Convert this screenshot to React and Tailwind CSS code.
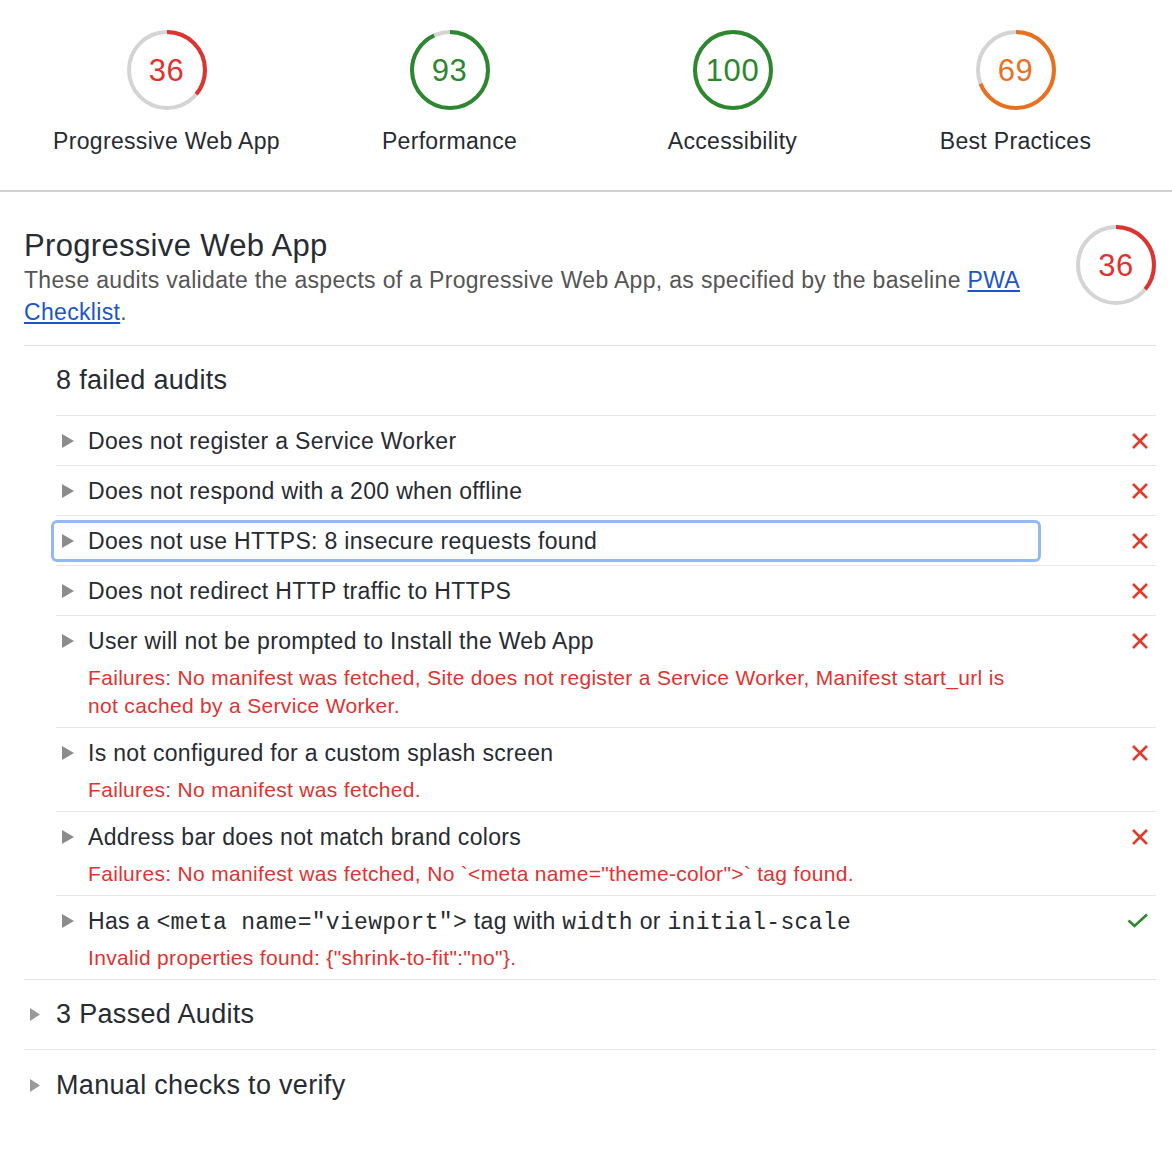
import React from "react";

const FAIL = "#df332f";
const PASS = "#2b882f";
const AVG = "#e8711f";

function Gauge({ score, color }) {
    const r = 38;
    const c = 2 * Math.PI * r;
    const len = (score / 100) * c;
    return (
        <div className="relative w-[80px] h-[80px]">
            <svg width="80" height="80" viewBox="0 0 80 80" className="-rotate-90">
                <circle cx="40" cy="40" r={r} fill="none" stroke="#d4d4d4" strokeWidth="4" />
                <circle
                    cx="40"
                    cy="40"
                    r={r}
                    fill="none"
                    stroke={color}
                    strokeWidth="4"
                    strokeDasharray={`${len} ${c}`}
                />
            </svg>
            <div
                className="absolute inset-0 flex items-center justify-center text-[31px] leading-none tracking-[0.02em]"
                style={{ color }}
            >
                {score}
            </div>
        </div>
    );
}

function Triangle({ size = "row" }) {
    return size === "row" ? (
        <svg width="12" height="14" viewBox="0 0 12 14" className="shrink-0">
            <path d="M0 0 L12 7 L0 14 Z" fill="#8c8c8c" />
        </svg>
    ) : (
        <svg width="10" height="13" viewBox="0 0 10 13" className="shrink-0">
            <path d="M0 0 L10 6.5 L0 13 Z" fill="#999" />
        </svg>
    );
}

function Cross() {
    return (
        <svg width="18" height="18" viewBox="0 0 18 18">
            <path d="M2 2 L16 16 M16 2 L2 16" stroke="#e53a2a" strokeWidth="2.6" />
        </svg>
    );
}

function Check() {
    return (
        <svg width="22" height="16" viewBox="0 0 22 16">
            <path d="M1.5 7.5 L7.5 13 L20 1.5" stroke="#2f8a2f" strokeWidth="2.6" fill="none" />
        </svg>
    );
}

const Code = ({ children }) => (
    <span className="font-['Liberation_Mono',monospace] text-[23px] leading-none">{children}</span>
);

const audits = [
    { title: "Does not register a Service Worker" },
    { title: "Does not respond with a 200 when offline" },
    { title: "Does not use HTTPS: 8 insecure requests found", focused: true },
    { title: "Does not redirect HTTP traffic to HTTPS" },
    {
        title: "User will not be prompted to Install the Web App",
        detail: "Failures: No manifest was fetched, Site does not register a Service Worker, Manifest start_url is not cached by a Service Worker.",
    },
    { title: "Is not configured for a custom splash screen", detail: "Failures: No manifest was fetched." },
    {
        title: "Address bar does not match brand colors",
        detail: 'Failures: No manifest was fetched, No `<meta name="theme-color">` tag found.',
    },
    {
        title: (
            <>
                Has a <Code>{'<meta name="viewport">'}</Code> tag with <Code>width</Code> or <Code>initial-scale</Code>
            </>
        ),
        detail: 'Invalid properties found: {"shrink-to-fit":"no"}.',
        pass: true,
    },
];

const categories = [
    { score: 36, label: "Progressive Web App", color: FAIL },
    { score: 93, label: "Performance", color: PASS },
    { score: 100, label: "Accessibility", color: PASS },
    { score: 69, label: "Best Practices", color: AVG },
];

export default function App() {
    return (
        <div className="w-[1172px] min-h-[1150px] bg-white text-[#272b32] tracking-[0.02em] font-['Liberation_Sans',Arial,sans-serif]">
            {/* top scores */}
            <div className="grid grid-cols-4 pl-[25px] pr-[15px] pt-[30px] pb-[36px] border-b-[2px] border-[#d0d0d0]">
                {categories.map((c) => (
                    <div key={c.label} className="flex flex-col items-center">
                        <Gauge score={c.score} color={c.color} />
                        <div className="mt-[18px] text-[23px] leading-[26px] whitespace-nowrap">{c.label}</div>
                    </div>
                ))}
            </div>

            <div className="pl-6 pr-4">
                {/* section header */}
                <div className="flex pt-[36px] pb-[17px] border-b border-[#e2e2e2]">
                    <div className="flex-1">
                        <h2 className="text-[31px] leading-[36px]">Progressive Web App</h2>
                        <p className="text-[23px] leading-[32px] text-[#555]">
                            These audits validate the aspects of a Progressive Web App, as specified by the baseline{" "}
                            <a href="#" className="text-[#1b55c8] underline">PWA Checklist</a>.
                        </p>
                    </div>
                    <div className="ml-6 w-[80px] -mt-[3px]">
                        <Gauge score={36} color={FAIL} />
                    </div>
                </div>

                {/* failed audits */}
                <div className="pl-8 border-b border-[#e2e2e2]">
                    <div className="h-[70px] flex items-center text-[27px] border-b border-[#e6e6e6]">8 failed audits</div>
                    {audits.map((a, i) => {
                        const last = i === audits.length - 1;
                        const pb = a.detail ? "pb-[7px]" : "pb-[11px]";
                        return (
                            <div key={i} className={`flex pt-3 ${pb} ${last ? "" : "border-b border-[#e6e6e6]"}`}>
                                <div className="w-[984px] -ml-[2px]">
                                    <div
                                        className={`flex items-center gap-[14px] pl-2 py-[5px] -my-[5px] rounded-[3px] ${a.focused ? "ring-[3px] ring-[#93b9f4]" : ""}`}
                                    >
                                        <Triangle />
                                        <div className="h-[26px] text-[23px] leading-[26px] whitespace-nowrap">{a.title}</div>
                                    </div>
                                    {a.detail && (
                                        <div className="mt-[10px] pl-[34px] pr-[20px] text-[21px] leading-[28px] text-[#df332f]">
                                            {a.detail}
                                        </div>
                                    )}
                                </div>
                                <div className="flex-1 flex justify-end pr-[7px] h-[26px] items-center">
                                    {a.pass ? <Check /> : <Cross />}
                                </div>
                            </div>
                        );
                    })}
                </div>

                {/* passed */}
                <div className="h-[70px] flex items-center gap-4 pl-[6px] border-b border-[#e6e6e6]">
                    <Triangle size="group" />
                    <span className="text-[27px]">3 Passed Audits</span>
                </div>
                <div className="h-[70px] flex items-center gap-4 pl-[6px]">
                    <Triangle size="group" />
                    <span className="text-[27px]">Manual checks to verify</span>
                </div>
            </div>
        </div>
    );
}
